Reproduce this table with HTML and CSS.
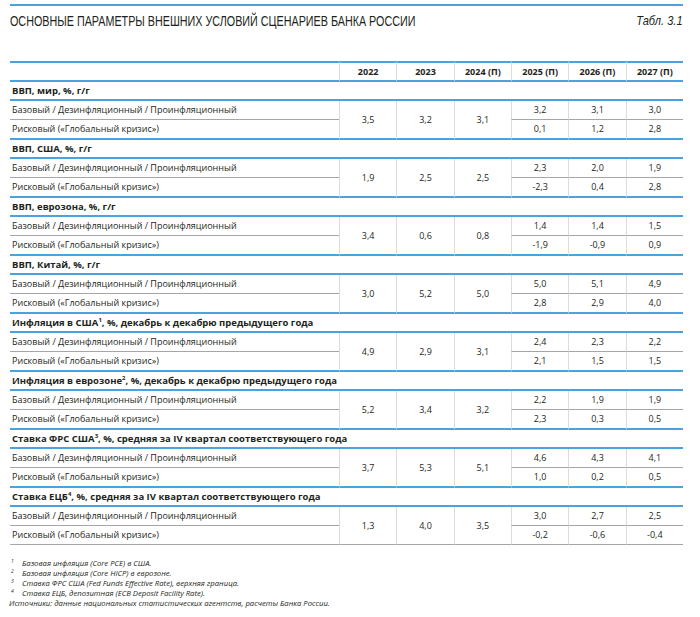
FILE: index.html
```html
<!DOCTYPE html>
<html lang="ru">
<head>
<meta charset="utf-8">
<title>Основные параметры внешних условий</title>
<link rel="stylesheet" href="styles.css">
</head>
<body>
<div class="page">
  <div class="title-bar">
    <h1 class="title">ОСНОВНЫЕ ПАРАМЕТРЫ ВНЕШНИХ УСЛОВИЙ СЦЕНАРИЕВ БАНКА РОССИИ</h1>
    <span class="tabl">Табл. 3.1</span>
  </div>
  <table class="data">
    <colgroup>
      <col class="c-label"><col class="c-year"><col class="c-year"><col class="c-year"><col class="c-year"><col class="c-year"><col class="c-year">
    </colgroup>
    <thead>
      <tr><th class="h-label"></th><th>2022</th><th>2023</th><th>2024 (П)</th><th>2025 (П)</th><th>2026 (П)</th><th>2027 (П)</th></tr>
    </thead>
    <tbody>
      <tr class="grp"><td colspan="7">ВВП, мир, %, г/г</td></tr>
      <tr class="r1"><td class="lbl">Базовый / Дезинфляционный / Проинфляционный</td><td class="span" rowspan="2">3,5</td><td class="span" rowspan="2">3,2</td><td class="span" rowspan="2">3,1</td><td>3,2</td><td>3,1</td><td>3,0</td></tr>
      <tr class="r2"><td class="lbl">Рисковый («Глобальный кризис»)</td><td>0,1</td><td>1,2</td><td>2,8</td></tr>

      <tr class="grp"><td colspan="7">ВВП, США, %, г/г</td></tr>
      <tr class="r1"><td class="lbl">Базовый / Дезинфляционный / Проинфляционный</td><td class="span" rowspan="2">1,9</td><td class="span" rowspan="2">2,5</td><td class="span" rowspan="2">2,5</td><td>2,3</td><td>2,0</td><td>1,9</td></tr>
      <tr class="r2"><td class="lbl">Рисковый («Глобальный кризис»)</td><td>-2,3</td><td>0,4</td><td>2,8</td></tr>

      <tr class="grp"><td colspan="7">ВВП, еврозона, %, г/г</td></tr>
      <tr class="r1"><td class="lbl">Базовый / Дезинфляционный / Проинфляционный</td><td class="span" rowspan="2">3,4</td><td class="span" rowspan="2">0,6</td><td class="span" rowspan="2">0,8</td><td>1,4</td><td>1,4</td><td>1,5</td></tr>
      <tr class="r2"><td class="lbl">Рисковый («Глобальный кризис»)</td><td>-1,9</td><td>-0,9</td><td>0,9</td></tr>

      <tr class="grp"><td colspan="7">ВВП, Китай, %, г/г</td></tr>
      <tr class="r1"><td class="lbl">Базовый / Дезинфляционный / Проинфляционный</td><td class="span" rowspan="2">3,0</td><td class="span" rowspan="2">5,2</td><td class="span" rowspan="2">5,0</td><td>5,0</td><td>5,1</td><td>4,9</td></tr>
      <tr class="r2"><td class="lbl">Рисковый («Глобальный кризис»)</td><td>2,8</td><td>2,9</td><td>4,0</td></tr>

      <tr class="grp"><td colspan="7">Инфляция в США<sup>1</sup>, %, декабрь к декабрю предыдущего года</td></tr>
      <tr class="r1"><td class="lbl">Базовый / Дезинфляционный / Проинфляционный</td><td class="span" rowspan="2">4,9</td><td class="span" rowspan="2">2,9</td><td class="span" rowspan="2">3,1</td><td>2,4</td><td>2,3</td><td>2,2</td></tr>
      <tr class="r2"><td class="lbl">Рисковый («Глобальный кризис»)</td><td>2,1</td><td>1,5</td><td>1,5</td></tr>

      <tr class="grp"><td colspan="7">Инфляция в еврозоне<sup>2</sup>, %, декабрь к декабрю предыдущего года</td></tr>
      <tr class="r1"><td class="lbl">Базовый / Дезинфляционный / Проинфляционный</td><td class="span" rowspan="2">5,2</td><td class="span" rowspan="2">3,4</td><td class="span" rowspan="2">3,2</td><td>2,2</td><td>1,9</td><td>1,9</td></tr>
      <tr class="r2"><td class="lbl">Рисковый («Глобальный кризис»)</td><td>2,3</td><td>0,3</td><td>0,5</td></tr>

      <tr class="grp"><td colspan="7">Ставка ФРС США<sup>3</sup>, %, средняя за IV квартал соответствующего года</td></tr>
      <tr class="r1"><td class="lbl">Базовый / Дезинфляционный / Проинфляционный</td><td class="span" rowspan="2">3,7</td><td class="span" rowspan="2">5,3</td><td class="span" rowspan="2">5,1</td><td>4,6</td><td>4,3</td><td>4,1</td></tr>
      <tr class="r2"><td class="lbl">Рисковый («Глобальный кризис»)</td><td>1,0</td><td>0,2</td><td>0,5</td></tr>

      <tr class="grp"><td colspan="7">Ставка ЕЦБ<sup>4</sup>, %, средняя за IV квартал соответствующего года</td></tr>
      <tr class="r1"><td class="lbl">Базовый / Дезинфляционный / Проинфляционный</td><td class="span last" rowspan="2">1,3</td><td class="span last" rowspan="2">4,0</td><td class="span last" rowspan="2">3,5</td><td>3,0</td><td>2,7</td><td>2,5</td></tr>
      <tr class="r2 last-row"><td class="lbl">Рисковый («Глобальный кризис»)</td><td>-0,2</td><td>-0,6</td><td>-0,4</td></tr>
    </tbody>
  </table>
  <div class="notes">
    <div class="note"><span class="n">1</span>Базовая инфляция (Core PCE) в США.</div>
    <div class="note"><span class="n">2</span>Базовая инфляция (Core HICP) в еврозоне.</div>
    <div class="note"><span class="n">3</span>Ставка ФРС США (Fed Funds Effective Rate), верхняя граница.</div>
    <div class="note"><span class="n">4</span>Ставка ЕЦБ, депозитная (ECB Deposit Facility Rate).</div>
    <div class="src">Источники: данные национальных статистических агентств, расчеты Банка России.</div>
  </div>
</div>
</body>
</html>
```
FILE: styles.css
```css
html, body {
  margin: 0;
  padding: 0;
  background: #fff;
}
body {
  font-family: "Open Sans", "DejaVu Sans", sans-serif;
  color: #231f20;
}
.page {
  width: 673px;
  padding: 4px 0 0 10px;
}
.title-bar {
  border-top: 2px solid #4aa3dc;
  display: flex;
  justify-content: space-between;
  align-items: center;
  height: 29px;
  margin-bottom: 26px;
}
.title {
  margin: 0;
  font-family: "Liberation Sans", Arial, sans-serif;
  font-weight: normal;
  font-size: 14.5px;
  color: #231f20;
  white-space: nowrap;
  transform: scaleX(0.742);
  transform-origin: left center;
}
.tabl {
  font-family: "Liberation Sans", Arial, sans-serif;
  font-style: italic;
  font-size: 13px;
  display: inline-block;
  transform: scaleX(0.85);
  transform-origin: right center;
}
table.data {
  width: 673px;
  border-collapse: separate;
  border-spacing: 0;
  table-layout: fixed;
  font-size: 9px;
}
col.c-label { width: 329px; }
col.c-year { width: 57.33px; }
thead th {
  border-top: 2px solid #4aa3dc;
  border-bottom: 2px solid #4aa3dc;
  border-left: 1px solid #dcdcdc;
  font-weight: bold;
  font-size: 9px;
  line-height: 17px;
  padding: 0;
  text-align: center;
}
thead th.h-label { border-left: none; }
tr.grp td {
  font-weight: bold;
  font-size: 9.5px;
  line-height: 17px;
  padding: 0 0 0 2px;
  border-bottom: 2px solid #4aa3dc;
  white-space: nowrap;
}
tr.grp sup {
  font-size: 6px;
  line-height: 0;
  vertical-align: 4px;
}
tbody tr.r1 td, tbody tr.r2 td {
  line-height: 18px;
  padding: 0;
  text-align: center;
  border-left: 1px solid #dcdcdc;
}
tbody tr td.lbl {
  text-align: left;
  padding-left: 2px;
  border-left: none;
  white-space: nowrap;
}
tbody tr.r1 td { border-bottom: 1px solid #a6a6a6; }
tbody tr.r2 td, tbody tr td.span { border-bottom: 2px solid #4aa3dc; }
tbody tr.last-row td, tbody tr td.span.last { border-bottom: 1px solid #a6a6a6; }
td.span { vertical-align: middle; }
.notes {
  margin-top: 13px;
  font-style: italic;
  font-size: 7.7px;
  line-height: 10px;
}
.note {
  display: flex;
}
.note .n {
  width: 12px;
  font-size: 5px;
  line-height: 6px;
  padding-left: 1px;
  box-sizing: border-box;
}
.src { margin-left: -1px; }
```
